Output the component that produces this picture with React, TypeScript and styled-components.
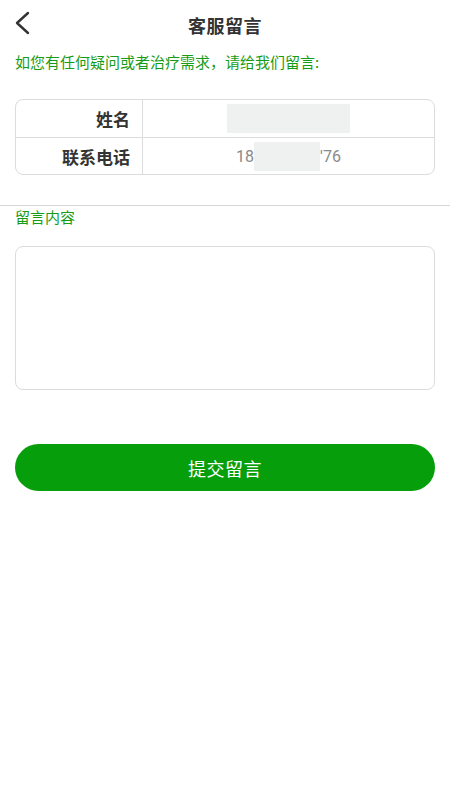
import React from 'react'
import styled, { createGlobalStyle } from 'styled-components'

const GlobalStyle = createGlobalStyle`
  html, body {
    margin: 0;
    padding: 0;
    background: #fff;
    font-family: "Noto Sans CJK SC", "Noto Sans", sans-serif;
  }
  * { box-sizing: border-box; }
`

const Page = styled.div`
  width: 450px;
  min-height: 800px;
  background: #fff;
  display: flex;
  flex-direction: column;
`

const Header = styled.div`
  position: relative;
  height: 49px;
  display: flex;
  align-items: center;
  justify-content: center;
`

const BackButton = styled.button`
  position: absolute;
  left: 8px;
  top: 8px;
  width: 30px;
  height: 30px;
  padding: 0;
  border: none;
  background: none;
  display: flex;
  align-items: center;
  justify-content: center;
`

const Title = styled.h1`
  margin: 0;
  font-size: 18px;
  font-weight: 700;
  color: #333;
  letter-spacing: 0.5px;
`

const Content = styled.div`
  padding: 0 15px;
`

const GreenText = styled.div<{ $top?: number }>`
  font-size: 15px;
  line-height: 20px;
  color: #179c17;
  margin-top: ${(p) => p.$top ?? 0}px;
`

const InfoTable = styled.div`
  margin-top: 27px;
  border: 1px solid #dcdcdc;
  border-radius: 8px;
  overflow: hidden;
`

const Row = styled.div`
  display: grid;
  grid-template-columns: 127px 1fr;
  height: 37px;
  & + & {
    border-top: 1px solid #dcdcdc;
  }
`

const Label = styled.div`
  border-right: 1px solid #dcdcdc;
  display: flex;
  align-items: center;
  justify-content: flex-end;
  padding-right: 12px;
  font-size: 17px;
  font-weight: 700;
  color: #333;
`

const Value = styled.div`
  display: flex;
  align-items: center;
  justify-content: center;
  font-family: Roboto, "Noto Sans CJK SC", sans-serif;
  font-size: 16px;
  color: #8a8a8a;
`

const Masked = styled.span<{ $w: number }>`
  display: inline-block;
  width: ${(p) => p.$w}px;
  height: 29px;
  background: #eff0f0;
`

const Divider = styled.div`
  margin-top: 30px;
  height: 1px;
  background: #d8d8d8;
`

const TextArea = styled.textarea`
  display: block;
  width: 100%;
  height: 144px;
  margin-top: 19px;
  border: 1px solid #dcdcdc;
  border-radius: 8px;
  resize: none;
  outline: none;
  padding: 10px;
  font-family: inherit;
  font-size: 15px;
`

const SubmitButton = styled.button`
  display: block;
  width: 100%;
  height: 47px;
  margin-top: 54px;
  border: none;
  border-radius: 24px;
  background: #069e0a;
  color: #fff;
  font-family: inherit;
  font-size: 18px;
  letter-spacing: 0.5px;
`

export default function App() {
  return (
    <Page>
      <GlobalStyle />
      <Header>
        <BackButton aria-label="返回">
          <svg width="20" height="24" viewBox="0 0 20 24" fill="none">
            <path d="M15 2 L4 12 L15 22" stroke="#333" strokeWidth="2.4" strokeLinecap="round" strokeLinejoin="round" />
          </svg>
        </BackButton>
        <Title>客服留言</Title>
      </Header>
      <Content>
        <GreenText $top={3}>如您有任何疑问或者治疗需求，请给我们留言:</GreenText>
        <InfoTable>
          <Row>
            <Label>姓名</Label>
            <Value>
              <Masked $w={123} />
            </Value>
          </Row>
          <Row>
            <Label>联系电话</Label>
            <Value>
              18<Masked $w={66} />'76
            </Value>
          </Row>
        </InfoTable>
      </Content>
      <Divider />
      <Content>
        <GreenText $top={1}>留言内容</GreenText>
        <TextArea />
        <SubmitButton>提交留言</SubmitButton>
      </Content>
    </Page>
  )
}
